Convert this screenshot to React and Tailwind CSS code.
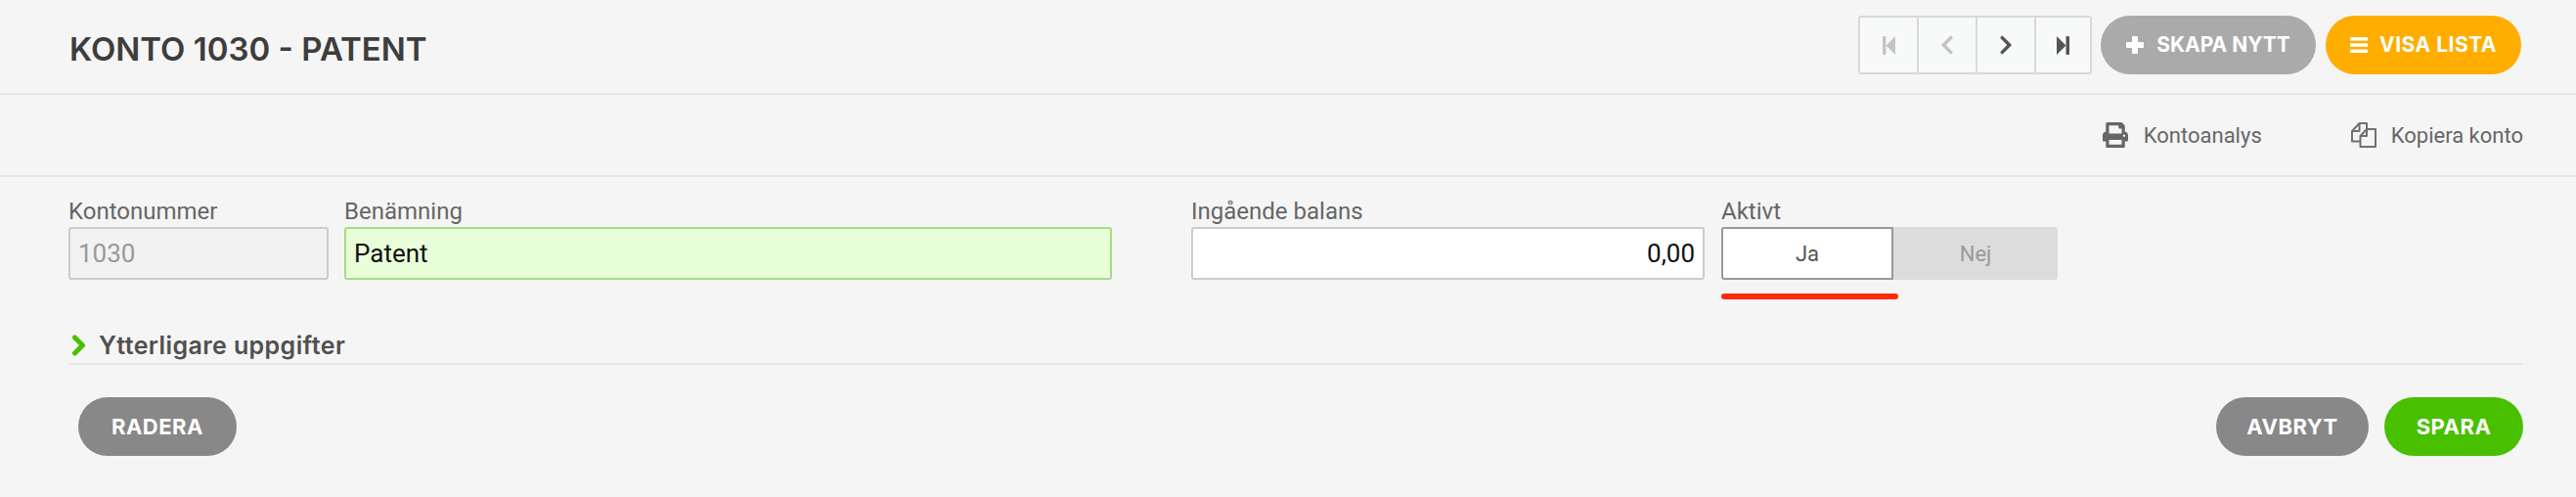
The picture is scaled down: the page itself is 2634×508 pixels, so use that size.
import React from 'react';
import { FaChevronLeft, FaChevronRight, FaPrint } from 'react-icons/fa';

const StepIcon = ({ flip }) => (
  <svg width="13" height="19" viewBox="0 0 13 19" fill="currentColor" className={flip ? 'scale-x-[-1]' : ''}>
    <rect x="0" y="0" width="3.500" height="19" rx="1" />
    <path d="M3.500 9.500 13 0v19z" />
  </svg>
);

const PlusIcon = () => (
  <svg width="18" height="18" viewBox="0 0 18 18" fill="currentColor">
    <rect x="6" y="0" width="6" height="18" rx="1" />
    <rect x="0" y="6" width="18" height="6" rx="1" />
  </svg>
);

const BarsIcon = () => (
  <svg width="18" height="16" viewBox="0 0 18 16" fill="currentColor">
    <rect x="0" y="0" width="18" height="3.500" rx="0.500" />
    <rect x="0" y="6.250" width="18" height="3.500" rx="0.500" />
    <rect x="0" y="12.500" width="18" height="3.500" rx="0.500" />
  </svg>
);

const CopyIcon = () => (
  <svg width="26" height="26" viewBox="0 0 26 26" fill="none" stroke="#707070" strokeWidth="2" strokeLinejoin="round">
    <path d="M9.500 19.500H1V9l7.500-8H16v6" />
    <path d="M8.500 1v8H1" />
    <path d="M9.500 25V14l6.500-7h9v18z" />
    <path d="M16 7v7H9.500" />
  </svg>
);

const SectionChevron = () => (
  <svg width="15" height="22" viewBox="0 0 15 22" fill="none" stroke="#48c000" strokeWidth="5" strokeLinejoin="round" strokeLinecap="round">
    <path d="M3.500 3l8 8-8 8" />
  </svg>
);

const PagerButton = ({ children, dim }) => (
  <button className={`w-[60px] last:w-[55px] shrink-0 h-full flex items-center justify-center border-r-2 border-[#d9d9d9] last:border-r-0 ${dim ? 'text-[#c4c4c4]' : 'text-[#555555]'}`}>
    {children}
  </button>
);

const PillButton = ({ color, width, children }) => (
  <button className={`h-[60px] rounded-full flex items-center justify-center text-white font-bold ${color} ${width}`}>
    {children}
  </button>
);

const Field = ({ label, width, children }) => (
  <div className={`flex flex-col ${width}`}>
    <label className="h-[26px] text-[24px] leading-[20px] text-[#666666]">{label}</label>
    {children}
  </div>
);

const App = () => {
  return (
    <div className="w-[2634px] h-[508px] bg-[#f5f5f5] overflow-hidden font-['Roboto',sans-serif]">
      <header className="h-[97px] border-b-2 border-[#e6e6e6] pl-[71px] pr-[56px] pt-4 flex justify-between">
        <h1 className="mt-1 h-[60px] leading-[60px] text-[33px] font-semibold text-[#3d3d3d] font-['Inter',sans-serif]">KONTO 1030 - PATENT</h1>
        <div className="flex font-['Inter',sans-serif] text-[21px]">
          <div className="flex w-[239px] h-[60px] border-2 border-[#d9d9d9] rounded-[3px] bg-[#f8f9f9] mr-[9px]">
            <PagerButton dim><StepIcon /></PagerButton>
            <PagerButton dim><FaChevronLeft size={22} /></PagerButton>
            <PagerButton><FaChevronRight size={22} /></PagerButton>
            <PagerButton><StepIcon flip /></PagerButton>
          </div>
          <PillButton color="bg-[#aaaaaa] gap-[13px]" width="w-[220px] mr-[10px]"><PlusIcon />SKAPA NYTT</PillButton>
          <PillButton color="bg-[#ffae00] gap-[12px]" width="w-[200px] tracking-[0.5px]"><BarsIcon />VISA LISTA</PillButton>
        </div>
      </header>

      <div className="h-[84px] border-b-2 border-[#e6e6e6] pr-[54px] flex items-center justify-end text-[22px] text-[#666666]">
        <a className="flex items-center gap-[16px] mr-[91px]"><FaPrint size={26} color="#666" />Kontoanalys</a>
        <a className="flex items-center gap-[15px]"><CopyIcon />Kopiera konto</a>
      </div>

      <div className="flex pl-[70px] pt-[25px]">
        <Field label="Kontonummer" width="w-[266px] mr-4">
          <input readOnly value="1030" className="h-[54px] px-2 border-2 border-[#cccccc] rounded-[3px] bg-[#f2f2f2] text-[26px] text-[#999999] outline-none" />
        </Field>
        <Field label="Benämning" width="w-[785px] mr-[81px]">
          <input readOnly value="Patent" className="h-[54px] px-2 border-2 border-[#a5dc86] rounded-[3px] bg-[#e8ffd9] text-[26px] text-[#111111] outline-none" />
        </Field>
        <Field label="Ingående balans" width="w-[525px] mr-[17px]">
          <input readOnly value="0,00" className="h-[54px] px-2 border-2 border-[#cccccc] rounded-[3px] bg-white text-[26px] text-right text-[#111111] outline-none" />
        </Field>
        <Field label="Aktivt" width="w-[344px]">
          <div className="flex h-[54px] bg-[#dcdcdc] rounded-[3px] text-[22px]">
            <div className="w-[176px] flex items-center justify-center bg-white border-2 border-[#999999] rounded-l-[3px] text-[#555555]">Ja</div>
            <div className="flex-1 flex items-center justify-center text-[#999999]">Nej</div>
          </div>
          <div className="w-[181px] h-[6px] mt-[14px] rounded-full bg-[#ff2a00]" />
        </Field>
      </div>

      <div className="ml-[70px] mr-[54px] mt-[36px] h-[31px] border-b-2 border-[#e6e6e6] flex items-start pl-[3px] text-[25px] tracking-[0.4px] font-semibold text-[#505050] font-['Inter',sans-serif]">
        <SectionChevron />
        <span className="ml-[13px] leading-[22px]">Ytterligare uppgifter</span>
      </div>

      <div className="flex justify-between pl-20 pr-[54px] pt-[33px] font-['Inter',sans-serif] text-[22px] tracking-[0.5px]">
        <PillButton color="bg-[#888888]" width="w-[162px]">RADERA</PillButton>
        <div className="flex gap-4">
          <PillButton color="bg-[#888888]" width="w-[156px]">AVBRYT</PillButton>
          <PillButton color="bg-[#48c000]" width="w-[142px]">SPARA</PillButton>
        </div>
      </div>
    </div>
  );
};

export default App;
